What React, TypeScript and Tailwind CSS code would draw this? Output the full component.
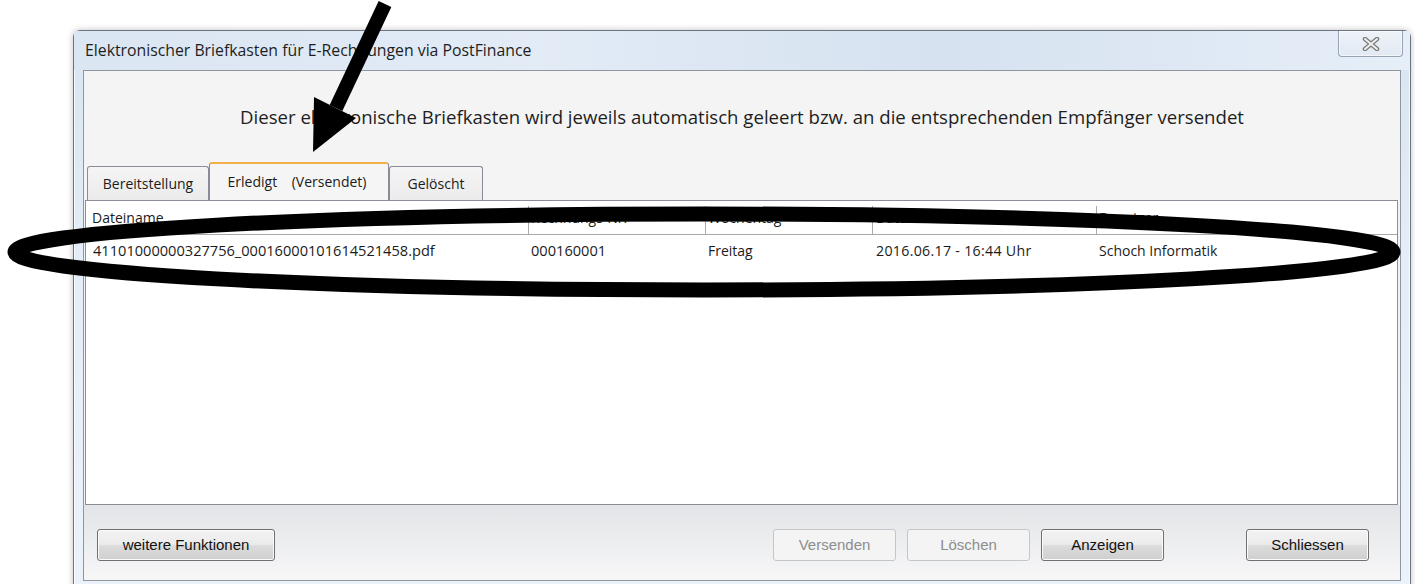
import React from 'react';

type Column = {
  key: string;
  label: string;
  width: string;
};

const columns: Column[] = [
  {key: 'file', label: 'Dateiname', width: 'w-[442px] pl-[6px]'},
  {key: 'number', label: 'Rechnungs-Nr.', width: 'w-[176px] pl-[2px]'},
  {key: 'weekday', label: 'Wochentag', width: 'w-[166px] pl-[2px]'},
  {key: 'date', label: 'Datum', width: 'w-[223px] pl-[3px]'},
  {key: 'user', label: 'Benutzer', width: 'flex-1 pl-[2px]'}
];

const rows = [
  {
    file: '41101000000327756_00016000101614521458.pdf',
    number: '000160001',
    weekday: 'Freitag',
    date: '2016.06.17 - 16:44 Uhr',
    user: 'Schoch Informatik'
  }
];

const uiFont = "font-['Open_Sans','Noto_Sans',sans-serif]";
const buttonFont = "font-['Liberation_Sans',Arial,sans-serif]";

function WinButton({
  label,
  width,
  disabled = false
}: {
  label: string;
  width: string;
  disabled?: boolean;
}) {
  return (
    <button
      type="button"
      disabled={disabled}
      className={`${width} ${buttonFont} flex h-[32px] items-center justify-center rounded-[3px] border text-[15px] ${
        disabled
          ? 'border-[#c3c7ca] bg-[#f4f4f4] text-[#8d8d8d]'
          : 'border-[#707070] bg-[linear-gradient(180deg,#f3f3f3_0%,#ebebeb_48%,#dcdcdc_52%,#cfcfcf_100%)] text-[#111] shadow-[inset_0_0_0_1px_#fbfbfb]'
      }`}
    >
      {label}
    </button>
  );
}

function Tab({
  label,
  width,
  active = false
}: {
  label: string;
  width: string;
  active?: boolean;
}) {
  return (
    <div
      className={`${width} flex items-center justify-center whitespace-pre rounded-t-[3px] border border-b-0 text-[14px] text-[#1b1b1b] ${
        active
          ? 'h-[38px] border-[#898c95] border-t-[2px] border-t-[#f2b04a] bg-[#f5f5f5] pb-[2px] pr-[4px]'
          : 'h-[34px] border-[#898c95] bg-[linear-gradient(180deg,#f5f5f5_0%,#ebebeb_100%)]'
      }`}
    >
      {label}
    </div>
  );
}

function CloseGlyph() {
  return (
    <svg width="20" height="14" viewBox="0 0 20 14">
      <path
        d="M4 2 L16 12 M16 2 L4 12"
        stroke="#7a7a7a"
        strokeWidth="4.5"
        strokeLinecap="round"
        fill="none"
      />
      <path
        d="M4 2 L16 12 M16 2 L4 12"
        stroke="#f0f0f0"
        strokeWidth="2"
        strokeLinecap="round"
        fill="none"
      />
    </svg>
  );
}

export default function App() {
  return (
    <div className="relative h-[584px] w-[1415px] overflow-hidden bg-white">
      <div className="pl-[73px] pt-[30px]">
        <div className="h-[570px] w-[1338px] rounded-t-[7px] border border-[#6b7581] bg-[linear-gradient(180deg,#d8e4f2_0%,#e4edf8_40%,#ebf2fa_100%)] shadow-[inset_0_0_0_1px_rgba(255,255,255,0.75),0_0_6px_rgba(0,0,0,0.25)]">
          {/* title bar */}
          <div className="flex h-[39px] items-start justify-between bg-[linear-gradient(90deg,#dbe6f3_0%,#e2ebf6_35%,#d6e2f0_65%,#e6eef8_100%)] pl-[11px] pr-[7px]">
            <span className={`${uiFont} self-center text-[15.8px] text-[#1e1e1e]`}>
              Elektronischer Briefkasten für E-Rechnungen via PostFinance
            </span>
            <div className="flex h-[26px] w-[65px] items-center justify-center rounded-b-[4px] border border-t-0 border-[#97a3b2] bg-[linear-gradient(180deg,#eef3f9_0%,#e1e9f3_100%)] shadow-[inset_0_0_0_1px_rgba(255,255,255,0.6)]">
              <CloseGlyph />
            </div>
          </div>

          {/* client area */}
          <div className={`${uiFont} mx-[9px] flex h-[511px] flex-col border border-[#8f969f] bg-[#f4f4f4]`}>
            <div className="flex h-[91px] shrink-0 items-center justify-center text-[18.6px] text-[#1e1e1e]">
              Dieser elektronische Briefkasten wird jeweils automatisch geleert bzw. an die entsprechenden Empfänger versendet
            </div>

            <div className="flex h-[38px] shrink-0 items-end pl-[3px]">
              <Tab label="Bereitstellung" width="w-[122px]" />
              <Tab label="Erledigt    (Versendet)" width="w-[180px]" active />
              <Tab label="Gelöscht" width="w-[94px]" />
            </div>

            <div className="ml-px mr-[2px] flex h-[305px] shrink-0 flex-col border border-[#8a8e96] bg-white">
              <div className="flex h-[34px] shrink-0 border-b border-[#a9a9a9] text-[14px] text-[#1b1b1b]">
                {columns.map((column, index) => (
                  <React.Fragment key={column.key}>
                    {index > 0 ? (
                      <div className="h-[28px] w-px shrink-0 self-end bg-[#a9a9a9]" />
                    ) : null}
                    <div className={`${column.width} flex items-center`}>
                      {column.label}
                    </div>
                  </React.Fragment>
                ))}
              </div>

              {rows.map((row) => (
                <div
                  key={row.file}
                  className="flex h-[32px] items-baseline pt-[5px] text-[14.6px] leading-[20px] text-[#1b1b1b]"
                >
                  <div className="w-[443px] pl-[7px]">{row.file}</div>
                  <div className="w-[177px] pl-[2px]">{row.number}</div>
                  <div className="w-[167px] pl-[2px] text-[14px]">{row.weekday}</div>
                  <div className="w-[224px] pl-[3px] text-[14.2px] tracking-[0.3px]">{row.date}</div>
                  <div className="flex-1 pl-[2px] text-[14px]">{row.user}</div>
                </div>
              ))}
            </div>

            <div className="flex flex-1 items-start bg-[linear-gradient(180deg,#e2e4e7_0%,#f7f7f8_100%)] pl-[13px] pr-[31px] pt-[24px]">
              <WinButton label="weitere Funktionen" width="w-[178px]" />
              <div className="flex-1" />
              <div className="flex gap-[11px]">
                <WinButton label="Versenden" width="w-[123px]" disabled />
                <WinButton label="Löschen" width="w-[123px]" disabled />
                <WinButton label="Anzeigen" width="w-[123px]" />
              </div>
              <div className="ml-[82px]">
                <WinButton label="Schliessen" width="w-[123px]" />
              </div>
            </div>
          </div>
        </div>
      </div>

      {/* hand-drawn markup on top */}
      <svg
        className="pointer-events-none absolute inset-0"
        width="1415"
        height="584"
        viewBox="0 0 1415 584"
      >
        <ellipse
          cx="704"
          cy="252"
          rx="689"
          ry="38"
          fill="none"
          stroke="#000"
          strokeWidth="15"
        />
        <line x1="385" y1="4" x2="336" y2="108" stroke="#000" strokeWidth="14" />
        <polygon points="313,152 314,97 356,118" fill="#000" />
      </svg>
    </div>
  );
}
